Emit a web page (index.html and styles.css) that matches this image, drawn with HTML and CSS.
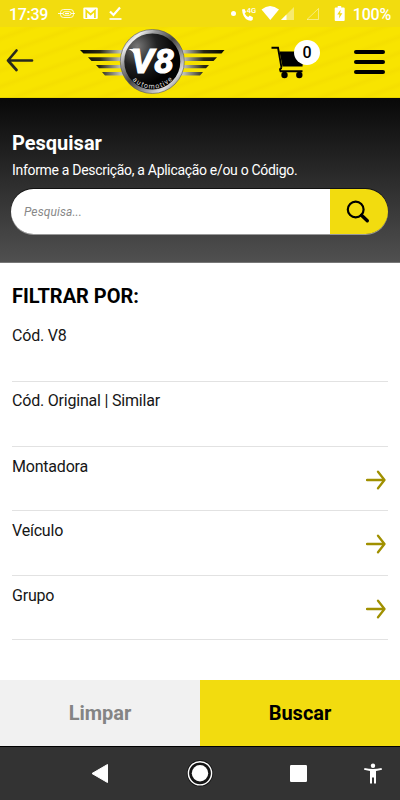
FILE: index.html
```html
<!DOCTYPE html>
<html lang="pt-BR">
<head>
<meta charset="utf-8">
<meta name="viewport" content="width=device-width, initial-scale=1">
<title>V8 Automotive</title>
<link rel="stylesheet" href="styles.css">
</head>
<body>
<div class="status">
  <span class="time">17:39</span>
  <svg class="status-left" width="66" height="27" viewBox="0 0 66 27" fill="none" stroke="#fff">
    <rect x="2.500" y="9.500" width="13" height="8" rx="3" stroke-width="1" opacity=".85"/>
    <path d="M0 13.500h5M13 13.500h4" stroke-width="1" opacity=".85"/>
    <rect x="5" y="11.700" width="8" height="3.600" rx="1.800" stroke-width="1" opacity=".85"/><path d="M7 13.500h4" stroke-width="1"/>
    <rect x="25.300" y="7.500" width="14.500" height="11.500" rx="1.200" fill="#fff" stroke="none"/>
    <path d="M28.300 18v-7.300l4.300 3.800 4.300-3.800V18" stroke="#f2dc0f" stroke-width="1.700"/>
    <path d="M52 11.500l3.500 3.500 6.500-7.500" stroke-width="2.200"/>
    <path d="M51.500 19h12" stroke-width="1.600"/>
  </svg>
  <svg class="status-right" width="120" height="27" viewBox="0 0 120 27" fill="#fff">
    <circle cx="5.500" cy="13.500" r="2.500"/>
    <path d="M14 9.500l2.500-.5 1.500 3-1.300 1.600q1.200 2.400 3.500 3.400l1.500-1.500 3.200 1.700-.2 2.500q-1.200 1.600-4.500.6-5.600-2.400-6.200-10.800z"/>
    <text class="network" x="18.700" y="13">4G</text>
    <path d="M33.500 9.500q8.500-7 17.500 0L42.300 20z"/>
    <path d="M66 7v13H53z" opacity=".4"/><path d="M58.500 14.500V20H53z"/>
    <path d="M90.500 8.500v11H79z" fill="none" stroke="#fff" opacity=".45"/>
    <path d="M110 7.500h2V6h3.500v1.500h2.500q1 0 1 1v11.500q0 1-1 1h-8q-1 0-1-1V8.500q0-1 1-1z" transform="translate(-2.300)"/>
    <path d="M112.700 9.500l-3.500 5h2.300l-.6 4 3.500-5.200h-2.300z" fill="#f2dc0f"/>
  </svg>
  <span class="battery">100%</span>
</div>
<header class="header">
  <svg class="back" width="28" height="26" viewBox="0 0 28 26" fill="none" stroke="#28291d" stroke-width="2.700" stroke-linecap="round" stroke-linejoin="round"><path d="M26 13.500H2M10.500 3.500L2 13.500l8.500 9.500"/></svg>
  <svg class="logo" width="155" height="71" viewBox="0 2 155 71">
    <defs>
      <linearGradient id="wing" gradientUnits="userSpaceOnUse" x1="5" y1="0" x2="149" y2="0"><stop offset="0" stop-color="#080800"/><stop offset=".14" stop-color="#292814"/><stop offset=".28" stop-color="#c0c0b4"/><stop offset=".5" stop-color="#eee"/><stop offset=".72" stop-color="#c0c0b4"/><stop offset=".86" stop-color="#292814"/><stop offset="1" stop-color="#080800"/></linearGradient>
      <linearGradient id="rim" x1="0" y1="0" x2="1" y2="1"><stop offset="0" stop-color="#666"/><stop offset=".16" stop-color="#eee"/><stop offset=".28" stop-color="#999"/><stop offset=".48" stop-color="#444"/><stop offset=".68" stop-color="#999"/><stop offset=".82" stop-color="#ddd"/><stop offset="1" stop-color="#444"/></linearGradient>
      <radialGradient id="disc" cx=".25" cy=".25" r=".65"><stop offset="0" stop-color="#777"/><stop offset=".5" stop-color="#222"/><stop offset="1" stop-color="#020202"/></radialGradient>
      <path id="arc" d="M57.500 55A27 27 0 0 0 98.500 53.500"/>
    </defs>
    <g fill="url(#wing)">
      <path d="M5 25h144.500l-3 3.600H8.500z"/><path d="M13 32.300h129l-3.500 3.700H16.500z"/><path d="M21 40h113l-3 3.300H24z"/><path d="M27 47h101l-3 3.400H30z"/>
    </g>
    <circle cx="77.300" cy="36.500" r="30" fill="url(#disc)" stroke="url(#rim)" stroke-width="4"/>
    <circle cx="77.300" cy="36.500" r="32" fill="none" stroke="#555" stroke-width=".6"/>
    <text class="logo-mark" transform="translate(56 47.500)" textLength="43" lengthAdjust="spacingAndGlyphs">V8</text>
    <path d="M53.500 24H63l-1 4.500h-3q-1.500-3-5.500-4.500z" fill="#fff"/>
    <text class="logo-name"><textPath href="#arc" textLength="45">automotive</textPath></text>
  </svg>
  <div class="cart">
    <svg width="34" height="34" viewBox="0 0 34 34">
      <path d="M1 3h6.500l3.500 20M11.500 23.500q-3 0-1.500 3h22" transform="translate(-.5 -.3)" fill="none" stroke="#000" stroke-width="1.900"/>
      <path d="M8.500 6.500H33L31.500 21.500H11.500z"/><circle cx="13.500" cy="30" r="3.200"/><circle cx="28.300" cy="30" r="3.200"/>
    </svg>
    <span class="badge">0</span>
  </div>
  <div class="menu"><i></i><i></i><i></i></div>
</header>
<section class="search">
  <h1>Pesquisar</h1>
  <p>Informe a Descrição, a Aplicação e/ou o Código.</p>
  <div class="search-box">
    <span class="field">Pesquisa...</span>
    <span class="go"><svg width="24" height="24" viewBox="0 0 24 24" fill="none" stroke="#000"><circle cx="9.700" cy="9.500" r="7.900" stroke-width="2.200"/><path d="M15.500 15.200l5.800 5.600" stroke-width="3.400" stroke-linecap="round"/></svg></span>
  </div>
</section>
<main class="filters">
  <h2>FILTRAR POR:</h2>
  <div class="row"><span>Cód. V8</span></div>
  <div class="row"><span>Cód. Original | Similar</span></div>
  <div class="row pick"><span>Montadora</span><svg class="arrow" viewBox="0 0 20 20"><path d="M1 10h17M12 1.700L18.500 10 12 18.300"/></svg></div>
  <div class="row pick"><span>Veículo</span><svg class="arrow" viewBox="0 0 20 20"><path d="M1 10h17M12 1.700L18.500 10 12 18.300"/></svg></div>
  <div class="row pick"><span>Grupo</span><svg class="arrow" viewBox="0 0 20 20"><path d="M1 10h17M12 1.700L18.500 10 12 18.300"/></svg></div>
</main>
<div class="actions"><div class="clear">Limpar</div><div class="submit">Buscar</div></div>
<nav class="nav">
  <svg width="400" height="53" viewBox="0 0 400 53" fill="#fff">
    <path d="M92 26.500L107.500 17.500v18z" stroke="#fff" stroke-linejoin="round"/>
    <circle cx="200" cy="26.300" r="13.200" fill="#151515"/>
    <circle cx="200" cy="26.300" r="11.600" fill="none" stroke="#fff" stroke-width="1.400"/><circle cx="200" cy="26.300" r="8.200"/>
    <rect x="290" y="18" width="17" height="17" rx="1.200"/>
    <circle cx="373" cy="18.800" r="2.200"/><path d="M364.500 21q8.500 2 17 0l.5 1.800-6 1.200v12.500h-2V30.500h-2v6h-2V24l-6-1.200z"/>
  </svg>
</nav>
</body>
</html>
```
FILE: styles.css
```css
* { box-sizing: border-box; }
body { margin: 0; width: 400px; height: 800px; overflow: hidden; display: flex; flex-direction: column; background: #fff; font-family: Roboto, "Liberation Sans", sans-serif; color: #000; }
svg { display: block; flex: none; }
h1, h2, p { margin: 0; }
.status { height: 27px; flex: none; display: flex; align-items: center; background: #f2dc0f; color: #fff; font-size: 16px; font-weight: 500; padding: 2px 9px 0; line-height: 25px; }
.time { width: 49px; letter-spacing: -.3px; }
.status-left, .status-right { margin-top: -2px; }
.status-right { margin-left: 104px; }
.network { font-size: 7.5px; font-weight: 500; }
.battery { margin-left: 5px; letter-spacing: -.2px; }
.header { height: 71px; flex: none; display: flex; background: repeating-linear-gradient(160deg, #f8e400 0 7px, #f5df00 11px, #f8e400 15px); border-bottom: 1px solid #e8d400; }
.back { margin: 20px 0 0 6px; }
.logo { margin-left: 41px; }
.logo-mark { font-size: 33px; font-weight: 700; font-style: italic; fill: #fff; stroke: #fff; stroke-width: 1.1px; }
.logo-name { font-size: 7px; font-weight: 400; fill: #ddd; }
.cart { position: relative; width: 52px; height: 71px; margin-left: 40px; padding: 18px 0 0 1px; }
.badge { position: absolute; top: 13px; left: 24px; width: 26px; height: 25px; border-radius: 50%; background: #fff; font-size: 16px; font-weight: 500; line-height: 25px; text-align: center; }
.menu { margin: 23px 0 0 32px; width: 31px; display: flex; flex-direction: column; gap: 6px; }
.menu i { height: 4px; border-radius: 2px; background: #000; }
.search { height: 165px; flex: none; padding: 32px 12px 0 11px; background: linear-gradient(#080808, #505050); color: #fff; border-bottom: 1px solid #777; }
h1 { font-size: 20px; line-height: 26px; font-weight: 700; padding-left: 1px; }
.search p { margin-top: 4px; font-size: 14px; line-height: 20px; padding-left: 1px; white-space: nowrap; letter-spacing: -.31px; }
.search-box { display: flex; height: 45px; margin: 9px 0 0; border-radius: 23px; overflow: hidden; box-shadow: 0 -1px 0 #111, 0 1px 0 #999; }
.field { width: 319px; background: #fff; color: #888; font-size: 12px; font-style: italic; line-height: 45px; padding-left: 13px; padding-top: 1px; letter-spacing: .1px; }
.go { flex: 1; background: #f2dc0f; display: flex; padding: 11px 0 0 16px; }
.filters { height: 417px; flex: none; padding: 20px 12px 0; }
h2 { font-size: 20px; line-height: 27px; font-weight: 700; }
.row { height: 64.500px; display: flex; justify-content: space-between; font-size: 16px; line-height: 20px; color: #161616; padding-top: 9px; border-bottom: 1px solid #e2e2e2; letter-spacing: -.2px; }
h2 + .row { height: 72px; padding-top: 16px; }
.pick { padding-top: 10px; }
.arrow { width: 20px; height: 20px; margin: 13px 2px 0 0; fill: none; stroke: #a09000; stroke-width: 2.300; stroke-linecap: round; stroke-linejoin: round; }
.actions { height: 67px; flex: none; display: flex; font-size: 20px; font-weight: 700; line-height: 66px; text-align: center; border-bottom: 1px solid #000; }
.actions div { flex: 1; }
.clear { background: #f1f1f1; color: #848484; }
.submit { background: #f2dc0f; }
.nav { height: 53px; flex: none; background: #333; }
```
